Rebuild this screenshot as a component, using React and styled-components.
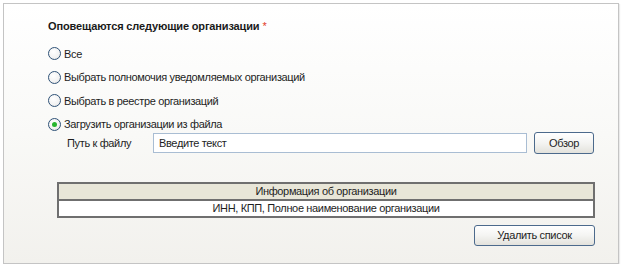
import React, { useState } from "react";
import styled, { createGlobalStyle } from "styled-components";

const Global = createGlobalStyle`
  html, body { margin: 0; padding: 0; background: #ffffff; }
  body { font-family: Tahoma, "Liberation Sans", Arial, sans-serif; font-size: 11px; color: #222; letter-spacing: -0.35px; }
`;

const Panel = styled.div`
  box-sizing: border-box;
  margin: 3px 0 0 3px;
  width: 616px;
  height: 261px;
  border: 1px solid #c4c4c4;
  box-shadow: 1px 1px 1px rgba(0,0,0,0.08);
  background: linear-gradient(to bottom, #ffffff 0%, #f9f9f7 50%, #f2f1ed 100%);
  padding: 13px 23px 0 44px;
  display: flex;
  flex-direction: column;
`;

const Title = styled.div`
  font-weight: bold;
  font-size: 11px;
  line-height: 18px;
  letter-spacing: -0.15px;
  color: #1a1a1a;
  & > span { color: #e23a2a; font-weight: normal; margin-left: 3px; }
`;

const RadioList = styled.div`
  display: flex;
  flex-direction: column;
  gap: 7.5px;
  margin-top: 10.5px;
`;

const RadioRow = styled.label`
  display: flex;
  align-items: center;
  height: 16px;
  gap: 3px;
  cursor: pointer;
  font-size: 11px;
  color: #1e1e1e;
`;

const Circle = styled.span`
  box-sizing: border-box;
  width: 13px;
  height: 13px;
  border-radius: 50%;
  border: 1px solid #2f5277;
  background: radial-gradient(circle at 40% 35%, #ffffff 0%, #f2f2f2 60%, #dcdcdc 100%);
  display: flex;
  align-items: center;
  justify-content: center;
  &::after {
    content: "";
    width: 5px;
    height: 5px;
    border-radius: 50%;
    background: ${p => (p.$checked ? "#27b52f" : "transparent")};
  }
`;

const FileRow = styled.div`
  display: flex;
  align-items: center;
  margin-top: 0;
  padding-left: 19px;
  height: 22px;
`;

const FileLabel = styled.span`
  width: 86px;
  font-size: 11px;
  color: #1e1e1e;
`;

const TextInput = styled.div`
  box-sizing: border-box;
  width: 374px;
  height: 20px;
  border: 1px solid #a9bdd3;
  background: #fff;
  padding: 0 5px;
  display: flex;
  align-items: center;
  font-size: 11px;
  color: #1e1e1e;
`;

const Button = styled.button`
  box-sizing: border-box;
  height: ${p => p.$h}px;
  width: ${p => p.$w}px;
  border: 1px solid #4c6a8c;
  border-radius: 3px;
  background: linear-gradient(to bottom, #ffffff 0%, #f4f4f2 50%, #e3e2dc 100%);
  font-family: inherit;
  font-size: 11px;
  letter-spacing: -0.35px;
  color: #1e1e1e;
  padding: 0;
  cursor: pointer;
`;

const BrowseButton = styled(Button)`
  margin-left: 7px;
`;

const Table = styled.div`
  box-sizing: border-box;
  margin: 27.5px 0 0 9px;
  width: 538px;
  border: 2px solid #6f6f6f;
  display: flex;
  flex-direction: column;
`;

const Cell = styled.div`
  height: ${p => p.$h}px;
  display: flex;
  align-items: center;
  justify-content: center;
  font-size: 11px;
  color: #1e1e1e;
  background: ${p => (p.$head ? "#e8e6d8" : "#ffffff")};
  border-bottom: ${p => (p.$head ? "2px solid #6f6f6f" : "none")};
`;

const Footer = styled.div`
  display: flex;
  justify-content: flex-end;
  margin-top: 7px;
`;

const options = [
  "Все",
  "Выбрать полномочия уведомляемых организаций",
  "Выбрать в реестре организаций",
  "Загрузить организации из файла",
];

export default function App() {
  const [sel, setSel] = useState(3);
  return (
    <>
      <Global />
      <Panel>
        <Title>
          Оповещаются следующие организации<span>*</span>
        </Title>
        <RadioList>
          {options.map((o, i) => (
            <RadioRow key={o} onClick={() => setSel(i)}>
              <Circle $checked={sel === i} />
              {o}
            </RadioRow>
          ))}
        </RadioList>
        <FileRow>
          <FileLabel>Путь к файлу</FileLabel>
          <TextInput>Введите текст</TextInput>
          <BrowseButton $w={60} $h={22}>Обзор</BrowseButton>
        </FileRow>
        <Table>
          <Cell $head $h={15}>Информация об организации</Cell>
          <Cell $h={15}>ИНН, КПП, Полное наименование организации</Cell>
        </Table>
        <Footer>
          <Button $w={121} $h={21}>Удалить список</Button>
        </Footer>
      </Panel>
    </>
  );
}
